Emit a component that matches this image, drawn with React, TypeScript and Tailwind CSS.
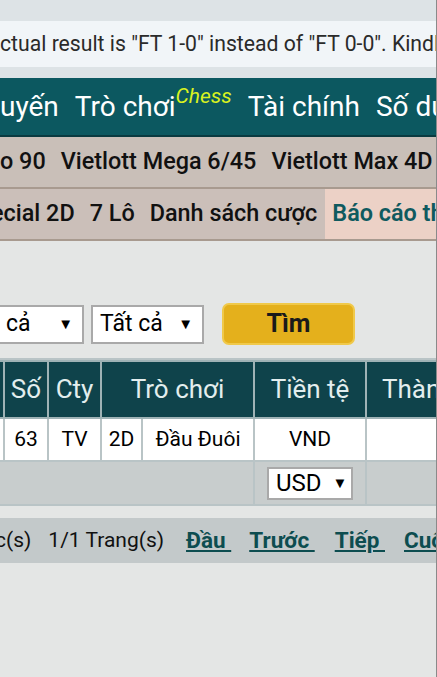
import { ReactNode } from 'react';

function Sel({ label, w }: { label: string; w: string }) {
  return (
    <div className={`flex items-center h-[39px] bg-white border-2 border-[#a9a9a9] pr-[9px] text-[23px] text-black ${w}`}>
      <span>{label}</span>
      <span className="ml-auto text-[15px]">▼</span>
    </div>
  );
}

function Cell({ children, className = '' }: { children?: ReactNode; className?: string }) {
  return <td className={`border-2 border-[#b9c4c6] text-center px-0 ${className}`}>{children}</td>;
}

function Th({ children, className = '', span }: { children?: ReactNode; className?: string; span?: number }) {
  return (
    <th
      colSpan={span}
      className={`border-2 border-[#9fb3b6] font-normal text-center text-[26px] text-[#e3eeee] whitespace-nowrap ${className}`}
    >
      {children}
    </th>
  );
}

function PageLink({ children, className = '' }: { children: ReactNode; className?: string }) {
  return (
    <span className={`text-[22.5px] font-bold text-[#0d4d50] underline whitespace-pre ${className}`}>{children}</span>
  );
}

export default function App() {
  return (
    <div className="w-[437px] h-[677px] overflow-hidden bg-[#e4e6e5] border-r border-[#8a8a8a] font-['Roboto',sans-serif]">
      {/* notice */}
      <div className="bg-[#dde3e6] pt-[21px] pb-[11px]">
        <div className="h-[46px] bg-[#f1f5f8] flex items-center whitespace-nowrap overflow-hidden text-[21.2px] text-[#2a2a2a]">
          ctual result is "FT 1-0" instead of "FT 0-0". Kindly take note.
        </div>
      </div>

      {/* main nav */}
      <div className="h-[59px] bg-[#0c5860] border-b-2 border-[#093a40] flex items-center gap-[16px] whitespace-nowrap overflow-hidden text-[28px] text-white">
        <span>uyến</span>
        <span>
          Trò chơi
          <span className="relative -top-[13px] italic text-[21px] text-[#d9f21f]">Chess</span>
        </span>
        <span>Tài chính</span>
        <span>Số dư</span>
      </div>

      {/* game menu */}
      <div className="h-[52px] bg-[#c9bfb8] border-b-2 border-[#a89a8f] flex items-center gap-[15px] whitespace-nowrap overflow-hidden text-[23.4px] font-medium text-[#111]">
        <span>o 90</span>
        <span>Vietlott Mega 6/45</span>
        <span>Vietlott Max 4D</span>
      </div>

      <div className="h-[52px] bg-[#cbbfb9] border-b-2 border-[#a89a8f] flex items-stretch whitespace-nowrap overflow-hidden text-[23.4px] font-medium text-[#111]">
        <span className="-ml-[9px] flex items-center">ecial 2D</span>
        <span className="ml-[15px] flex items-center">7 Lô</span>
        <span className="ml-[15px] flex items-center">Danh sách cược</span>
        <span className="ml-[8px] flex items-center bg-[#ecd1c6] text-[#0f5a5f] font-semibold pl-[7px] pr-4">Báo cáo thắng thua</span>
      </div>

      {/* filters */}
      <div className="mt-[63px] flex items-center h-[40px]">
        <Sel label="cả" w="w-[84px] border-l-0 pl-[6px]" />
        <div className="w-[7px]" />
        <Sel label="Tất cả" w="w-[113px] pl-[7px]" />
        <button className="ml-[18px] w-[133px] h-[42px] rounded-[7px] bg-[#e4b01c] border-2 border-[#f0c94a] text-[25px] font-bold text-[#1a1a1a]">
          Tìm
        </button>
      </div>

      {/* table */}
      <div className="mt-[14px] overflow-hidden border-t-2 border-[#b9c4c6]">
        <table className="border-collapse table-fixed w-[520px] text-[21px] text-black">
          <colgroup>
            <col className="w-[4px]" />
            <col className="w-[44px]" />
            <col className="w-[53px]" />
            <col className="w-[41px]" />
            <col className="w-[112px]" />
            <col className="w-[112px]" />
            <col className="w-[154px]" />
          </colgroup>
          <thead>
            <tr className="h-[57px] bg-[#0f434b]">
              <Th className="border-l-0" />
              <Th>Số</Th>
              <Th>Cty</Th>
              <Th span={2}>Trò chơi</Th>
              <Th>Tiền tệ</Th>
              <Th className="text-left pl-[15px]">Thành tiền</Th>
            </tr>
          </thead>
          <tbody>
            <tr className="h-[43px] bg-white">
              <Cell className="border-l-0" />
              <Cell>63</Cell>
              <Cell>TV</Cell>
              <Cell>2D</Cell>
              <Cell>Đầu Đuôi</Cell>
              <Cell>VND</Cell>
              <Cell />
            </tr>
            <tr className="h-[44px] bg-[#c8cdcd]">
              <td colSpan={5} className="border-2 border-l-0 border-[#b9c4c6]" />
              <Cell>
                <div className="mx-auto w-[86px] h-[33px] bg-white border-2 border-[#a9a9a9] flex items-center pl-[7px] text-[24px]">
                  USD<span className="text-[15px] ml-[11px]">▼</span>
                </div>
              </Cell>
              <Cell />
            </tr>
          </tbody>
        </table>
      </div>

      {/* pagination */}
      <div className="mt-[12px] h-[45px] bg-[#c3c9ca] flex items-center whitespace-nowrap overflow-hidden text-[21px] text-[#111]">
        <span className="-ml-[5px]">c(s)</span>
        <span className="ml-[17px]">1/1 Trang(s)</span>
        <PageLink className="ml-[22px]">Đầu </PageLink>
        <PageLink className="ml-[18px]">Trước </PageLink>
        <PageLink className="ml-[20px]">Tiếp </PageLink>
        <PageLink className="ml-[19px]">Cuối</PageLink>
      </div>
    </div>
  );
}
